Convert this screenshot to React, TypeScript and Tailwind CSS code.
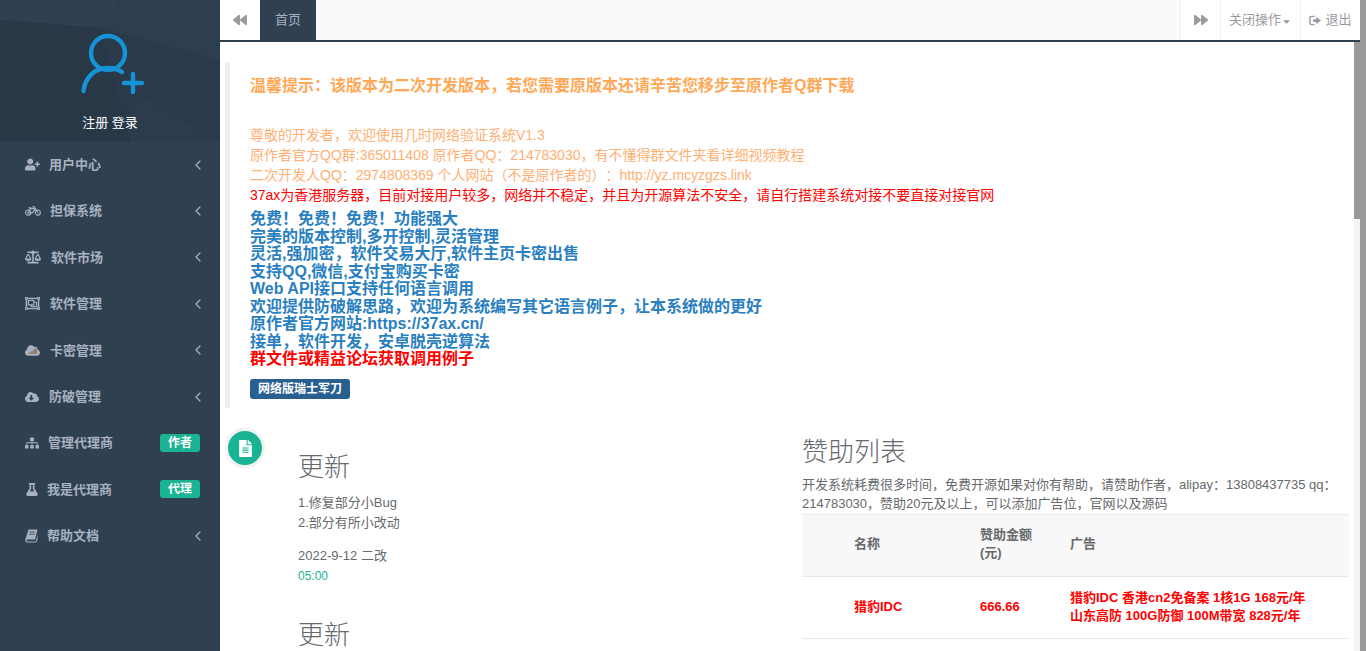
import React from 'react';
import { ChevronLeft } from 'lucide-react';
import {
  FaUserPlus, FaBicycle, FaBalanceScale, FaRegObjectGroup, FaCloud, FaCloudDownloadAlt,
  FaSitemap, FaFlask, FaFileAlt, FaBackward, FaForward, FaCaretDown,
} from 'react-icons/fa';

const FONT = "font-['Liberation_Sans','Noto_Sans_CJK_SC',sans-serif] [text-spacing-trim:space-all]";

// cloud with little bars, no package has this one
function CloudBars() {
  return (
    <span className="relative inline-block w-[15px] h-[15px]">
      <FaCloud className="w-[15px] h-[15px]" />
      <svg viewBox="0 0 15 15" className="absolute inset-0 w-[15px] h-[15px]">
        <path d="M5 11V9.500M7 11V8M9 11V6.500M11 11V5" stroke="#8a5f3a" strokeWidth="1.200" />
      </svg>
    </span>
  );
}

// slanted book like the old font awesome one
function SlantBook() {
  return (
    <svg viewBox="0 0 13 14" className="w-[13px] h-[14px]" fill="#a7b1c2">
      <path d="M3.500 0.500H12.500L10 10.500H2.500C1.700 10.500 1.400 11 1.500 11.500C1.600 12 2 12.500 2.800 12.500H10.800L12.500 5.500V11L11 13.500H2.500C1.200 13.500 0.300 12.500 0.300 11.200C0.300 10.800 0.400 10.400 0.500 10Z" />
      <path d="M4.500 3H10M4 5.200H9.500" stroke="#2f4050" strokeWidth="0.800" />
    </svg>
  );
}

const menu = [
  { icon: <FaUserPlus className="w-[15px] h-[15px]" />, label: '用户中心', gap: 'ml-[9px]', arrow: true },
  { icon: <FaBicycle className="w-[16px] h-[16px]" />, label: '担保系统', gap: 'ml-[9px]', arrow: true },
  { icon: <FaBalanceScale className="w-[16px] h-[16px]" />, label: '软件市场', gap: 'ml-[10px]', arrow: true },
  { icon: <FaRegObjectGroup className="w-[15px] h-[15px]" />, label: '软件管理', gap: 'ml-[10px]', arrow: true },
  { icon: <CloudBars />, label: '卡密管理', gap: 'ml-[10px]', arrow: true },
  { icon: <FaCloudDownloadAlt className="w-[14px] h-[14px]" />, label: '防破管理', gap: 'ml-[10px]', arrow: true },
  { icon: <FaSitemap className="w-[14px] h-[14px]" />, label: '管理代理商', gap: 'ml-[9px]', badge: '作者' },
  { icon: <FaFlask className="w-[12px] h-[13px] ml-px" />, label: '我是代理商', gap: 'ml-[9px]', badge: '代理' },
  { icon: <SlantBook />, label: '帮助文档', gap: 'ml-[9px]', arrow: true },
];

const blueLines = [
  '免费！免费！免费！功能强大',
  '完美的版本控制,多开控制,灵活管理',
  '灵活,强加密，软件交易大厅,软件主页卡密出售',
  '支持QQ,微信,支付宝购买卡密',
  'Web API接口支持任何语言调用',
  '欢迎提供防破解思路，欢迎为系统编写其它语言例子，让本系统做的更好',
  '原作者官方网站:https://37ax.cn/',
  '接单，软件开发，安卓脱壳逆算法',
];

function Sidebar() {
  return (
    <aside className="w-[220px] shrink-0 h-full bg-[#2f4050] flex flex-col">
      <div className="relative h-[142px] bg-[#2a3a4a] overflow-hidden flex flex-col items-center">
        <svg viewBox="0 0 220 142" className="absolute inset-0 w-full h-full">
          <polygon points="0,0 120,0 100,28 0,20" fill="#2f4051" />
          <polygon points="120,0 220,0 220,60 100,28" fill="#2d3e4e" />
          <polygon points="0,20 100,28 130,142 0,142" fill="#283847" />
          <polygon points="130,90 220,142 130,142" fill="#2c3c4c" />
        </svg>
        <svg viewBox="0 0 66 62" className="relative mt-[32px] ml-[6px] w-[66px] h-[62px]" fill="none" stroke="#1692d6" strokeWidth="4.400" strokeLinecap="round">
          <circle cx="28" cy="21" r="17" />
          <path d="M3.500 59C5 46 14 36 28 36c5 0 10 1.200 14 4" />
          <path d="M44 51H62M53 42V60" />
        </svg>
        <div className="relative mt-[19px] text-white text-[13px] leading-[20px]">注册 登录</div>
      </div>
      <nav className="-mt-[0.5px]">
        {menu.map((m) => (
          <div key={m.label} className="h-[46.4px] flex items-center pl-[25px] pr-[20px] text-[#a7b1c2] text-[13px] font-bold">
            <span className="flex items-center">{m.icon}</span>
            <span className={m.gap}>{m.label}</span>
            {m.arrow && <ChevronLeft className="ml-auto -mr-[6px] w-[16px] h-[16px]" strokeWidth={1.8} />}
            {m.badge && (
              <span className="ml-auto w-[40px] h-[18px] rounded-[3px] bg-[#1ab394] text-white text-[12px] leading-[18px] text-center">{m.badge}</span>
            )}
          </div>
        ))}
      </nav>
    </aside>
  );
}

function TopBar() {
  return (
    <div className="h-[42px] shrink-0 flex bg-[#fafafa] border-b-2 border-[#2f4050] text-[#999c9e] text-[13px]">
      <div className="w-[40px] bg-white flex items-center justify-center"><FaBackward className="w-[14px] h-[14px]" /></div>
      <div className="w-[56px] bg-[#2f4050] text-[#a7b1c2] flex items-center justify-center">首页</div>
      <div className="flex-1" />
      <div className="w-[40px] bg-white border-l border-[#eee] flex items-center justify-center"><FaForward className="w-[14px] h-[14px]" /></div>
      <div className="w-[80px] bg-white border-l border-[#eee] flex items-center justify-center">
        关闭操作<FaCaretDown className="w-[11px] h-[11px] mt-[2px]" />
      </div>
      <div className="w-[60px] bg-white border-l border-[#eee] flex items-center justify-center gap-[3px]">
        <svg viewBox="0 0 14 12" className="w-[13px] h-[11px]" fill="none" stroke="#999c9e">
          <path d="M6 1.500H2.500a1.500 1.500 0 0 0-1.500 1.500v6a1.500 1.500 0 0 0 1.500 1.500H6" strokeWidth="1.600" />
          <path d="M4.500 4.500H8V2l5 4-5 4V7.500H4.500z" fill="#999c9e" stroke="none" />
        </svg>
        退出
      </div>
    </div>
  );
}

function Notice() {
  return (
    <div className="ml-[5px] mt-[20px] border-l-[5px] border-[#eee] pl-[20px] h-[346px]">
      <h3 className="pt-[14px] text-[16px] leading-[20px] font-bold text-[#ffa958]">
        温馨提示：该版本为二次开发版本，若您需要原版本还请辛苦您移步至原作者Q群下载
      </h3>
      <div className="mt-[29px] text-[14px] leading-[20px] text-[#ffb074]">
        <p>尊敬的开发者，欢迎使用几时网络验证系统V1.3</p>
        <p>原作者官方QQ群:365011408 原作者QQ：214783030，有不懂得群文件夹看详细视频教程</p>
        <p>二次开发人QQ：2974808369 个人网站（不是原作者的）：http://yz.mcyzgzs.link</p>
        <p className="text-[#ff0000]">37ax为香港服务器，目前对接用户较多，网络并不稳定，并且为开源算法不安全，请自行搭建系统对接不要直接对接官网</p>
      </div>
      <div className="mt-[5px] text-[16px] leading-[17.500px] font-bold text-[#2a7fc1]">
        {blueLines.map((l) => <p key={l}>{l}</p>)}
        <p className="text-[#ff0000]">群文件或精益论坛获取调用例子</p>
      </div>
      <span className="mt-[11px] inline-block h-[20px] px-[8px] rounded-[3px] bg-[#286090] text-white text-[12px] leading-[20px] font-bold">网络版瑞士军刀</span>
    </div>
  );
}

function Sponsors() {
  return (
    <div className="w-[547px] pt-[29px]">
      <h2 className="text-[26px] leading-[30px] font-light text-[#676a6c]">赞助列表</h2>
      <p className="mt-[8px] text-[13px] leading-[19px] text-[#676a6c]">
        开发系统耗费很多时间，免费开源如果对你有帮助，请赞助作者，alipay：13808437735 qq：214783030，赞助20元及以上，可以添加广告位，官网以及源码
      </p>
      <table className="mt-px w-full table-fixed border-collapse text-[13px] leading-[20px]">
        <colgroup>
          <col className="w-[166px]" />
          <col className="w-[90px]" />
          <col />
        </colgroup>
        <thead>
          <tr className="h-[62px] bg-[#f8f8f8] border-y border-[#e7eaec] text-[#676a6c] text-left">
            <th className="pl-[52px] pb-[3px] font-bold">名称</th>
            <th className="pl-[12px] pb-[3px] font-bold leading-[18px]">赞助金额<br />(元)</th>
            <th className="pl-[12px] pb-[3px] font-bold">广告</th>
          </tr>
        </thead>
        <tbody>
          <tr className="h-[62px] border-b border-[#e7eaec] text-[#ff0000] font-bold">
            <td className="pl-[52px] pb-[2px]">猎豹IDC</td>
            <td className="pl-[12px] pb-[2px]">666.66</td>
            <td className="pl-[12px] pb-[2px] leading-[18px]">
              猎豹IDC 香港cn2免备案 1核1G 168元/年<br />山东高防 100G防御 100M带宽 828元/年
            </td>
          </tr>
        </tbody>
      </table>
    </div>
  );
}

export default function App() {
  return (
    <div className={`${FONT} w-[1366px] h-[651px] overflow-hidden flex bg-white`}>
      <Sidebar />
      <div className="flex-1 flex flex-col min-w-0">
        <TopBar />
        <div className="flex-1 flex min-h-0">
          <main className="flex-1 min-w-0 overflow-hidden">
            <Notice />
            <div className="relative flex pl-[78px]">
              <span className="absolute left-[5px] top-[20px] w-[40px] h-[40px] rounded-full border-[3px] border-[#f1f1f1] bg-[#1ab394] text-white flex items-center justify-center">
                <FaFileAlt className="w-[15px] h-[17px]" />
              </span>
              <div className="w-[504px]">
                <div className="pt-[44px]">
                  <h2 className="text-[26px] leading-[30px] font-light text-[#676a6c]">更新</h2>
                  <div className="mt-[11px] text-[13px] leading-[20px] text-[#676a6c]">
                    <p>1.修复部分小Bug</p>
                    <p>2.部分有所小改动</p>
                  </div>
                  <p className="mt-[13px] text-[13px] leading-[20px] text-[#676a6c]">2022-9-12 二改</p>
                  <p className="text-[12px] leading-[20px] text-[#1ab394]">05:00</p>
                </div>
                {/* only the heading of the next entry fits above the fold */}
                <h2 className="pt-[34px] text-[26px] leading-[30px] font-light text-[#676a6c]">更新</h2>
              </div>
              <Sponsors />
            </div>
          </main>
          <div className="w-[6px] shrink-0 bg-[#f4f4f4]"><div className="h-[177px] bg-[#999]" /></div>
        </div>
      </div>
      <div className="w-[6px] shrink-0 bg-[#999]" />
    </div>
  );
}
